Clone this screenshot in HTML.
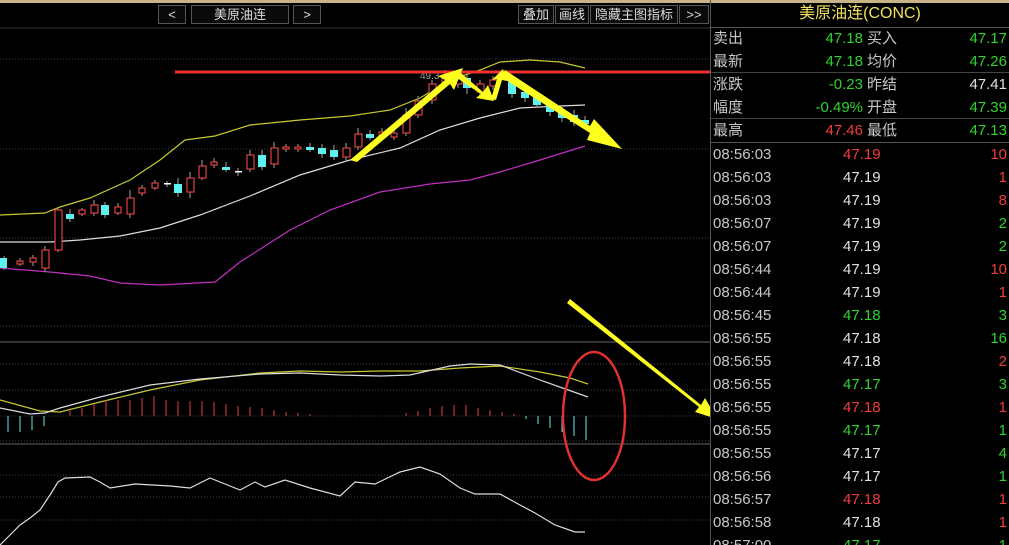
<!DOCTYPE html>
<html><head><meta charset="utf-8"><style>
*{margin:0;padding:0;box-sizing:border-box}
html,body{width:1009px;height:545px}
body{background:#000;overflow:hidden;position:relative;font-family:"Liberation Sans","Noto Sans CJK SC",sans-serif}
.btn{position:absolute;top:5px;height:19px;border:1px solid #555;color:#ddd;font-size:13px;line-height:17px;text-align:center;background:#0a0a0a}
#rp{position:absolute;left:710px;top:0;width:299px;height:545px;border-left:1px solid #555;overflow:hidden}
.r{position:absolute;left:2px;right:2px;height:23px;font-size:15px;line-height:23px}
.r span{position:absolute}
.g{color:#2fd22f}.rd{color:#f03c3c}.w{color:#e0e0e0}.l{color:#c8c8c8}
</style></head><body>
<div style="position:absolute;left:0;top:0;width:1009px;height:3px;background:#c9b48a"></div>
<div class="btn" style="left:158px;width:28px">&lt;</div>
<div class="btn" style="left:191px;width:98px">美原油连</div>
<div class="btn" style="left:293px;width:28px">&gt;</div>
<div class="btn" style="left:518px;width:36px">叠加</div>
<div class="btn" style="left:555px;width:34px">画线</div>
<div class="btn" style="left:590px;width:88px">隐藏主图指标</div>
<div class="btn" style="left:679px;width:30px">&gt;&gt;</div>
<svg width="710" height="545" style="position:absolute;left:0;top:0">
<line x1="0" y1="28" x2="710" y2="28" stroke="#333"/>
<g stroke="#444" stroke-dasharray="1,2">
<line x1="0" y1="59" x2="710" y2="59"/><line x1="0" y1="149" x2="710" y2="149"/><line x1="0" y1="238" x2="710" y2="238"/><line x1="0" y1="326" x2="710" y2="326"/>
<line x1="0" y1="364" x2="710" y2="364"/><line x1="0" y1="390" x2="710" y2="390"/><line x1="0" y1="416" x2="710" y2="416"/><line x1="0" y1="441" x2="710" y2="441"/>
<line x1="0" y1="475" x2="710" y2="475"/><line x1="0" y1="497" x2="710" y2="497"/><line x1="0" y1="520" x2="710" y2="520"/>
</g>
<line x1="0" y1="342" x2="710" y2="342" stroke="#666"/>
<line x1="0" y1="444" x2="710" y2="444" stroke="#666"/>
<polyline fill="none" stroke="#c8c832" stroke-width="1.2" points="0,215 45,213 60,207 90,198 130,180 160,160 185,140 215,136 250,125 300,120 350,116 390,110 420,98 450,80 480,70 500,62 530,60 560,62 585,68"/>
<polyline fill="none" stroke="#ddd" stroke-width="1.2" points="0,242 50,242 80,240 120,236 160,228 200,215 250,196 300,175 350,160 400,148 440,130 480,118 520,108 560,106 585,105"/>
<polyline fill="none" stroke="#c030c0" stroke-width="1.2" points="0,268 50,272 90,276 120,283 160,285 215,282 240,262 290,230 330,210 380,192 430,184 470,180 500,172 540,160 585,146"/>
<g stroke-width="1.2">
<path d="M4 256V270M20 258V266M33 255V266M45 246V272M58 208V252M70 209V222M82 208V216M94 200V216M105 202V218M118 203V215M130 190V218M142 185V196M155 180V190M167 181V187M178 178V197M190 172V198M202 160V180M214 158V168M226 162V172M238 168V176M250 150V172M262 150V170M274 142V168M286 144V152M298 144V152M310 143V152M322 144V158M334 145V160M346 143V162M358 128V150M370 130V140M382 128V139M394 128V140M406 108V136M418 96V118M432 80V104M445 70V86M458 70V88M467 74V94M480 80V96M493 76V90M512 78V98M525 88V102M537 94V108M550 100V116M562 106V122M574 110V126M585 116V128" stroke="#888"/>
</g>
<g fill="#000" stroke="#e04040" stroke-width="1.2">
<rect x="17" y="261" width="6" height="3"/><rect x="30" y="258" width="6" height="4"/><rect x="42" y="250" width="7" height="18"/><rect x="55" y="210" width="7" height="40"/><rect x="79" y="210" width="6" height="4"/><rect x="91" y="205" width="7" height="8"/><rect x="115" y="207" width="6" height="6"/><rect x="127" y="198" width="7" height="16"/><rect x="139" y="188" width="6" height="5"/><rect x="152" y="183" width="6" height="5"/><rect x="187" y="178" width="7" height="14"/><rect x="199" y="166" width="7" height="12"/><rect x="211" y="162" width="6" height="3"/><rect x="247" y="155" width="7" height="14"/><rect x="271" y="148" width="7" height="16"/><rect x="283" y="147" width="6" height="2"/><rect x="295" y="147" width="6" height="2"/><rect x="343" y="148" width="7" height="9"/><rect x="355" y="134" width="7" height="13"/><rect x="379" y="132" width="6" height="4"/><rect x="391" y="133" width="6" height="4"/><rect x="403" y="115" width="7" height="18"/><rect x="415" y="101" width="7" height="14"/><rect x="429" y="84" width="7" height="16"/><rect x="442" y="75" width="7" height="7"/><rect x="455" y="75" width="7" height="9"/><rect x="477" y="84" width="7" height="8"/><rect x="490" y="80" width="7" height="6"/>
</g>
<g fill="#5ff0f0">
<rect x="0" y="258" width="7" height="10"/><rect x="66" y="214" width="8" height="5"/><rect x="101" y="205" width="8" height="10"/><rect x="174" y="184" width="8" height="9"/><rect x="222" y="167" width="8" height="3"/><rect x="258" y="155" width="8" height="12"/><rect x="306" y="147" width="8" height="3"/><rect x="318" y="148" width="8" height="6"/><rect x="330" y="150" width="8" height="7"/><rect x="366" y="134" width="8" height="4"/><rect x="463" y="78" width="8" height="10"/><rect x="508" y="82" width="8" height="12"/><rect x="521" y="92" width="8" height="6"/><rect x="533" y="97" width="8" height="8"/><rect x="546" y="105" width="8" height="7"/><rect x="558" y="110" width="8" height="8"/><rect x="570" y="115" width="8" height="7"/><rect x="581" y="120" width="8" height="4"/>
</g>
<rect x="164" y="183" width="7" height="1.5" fill="#fff"/><rect x="235" y="171" width="7" height="1.5" fill="#fff"/>
<text x="420" y="79" fill="#999" font-size="10" font-family="Liberation Sans">49.3</text>
<line x1="175" y1="72" x2="715" y2="72" stroke="#f03030" stroke-width="3"/>
<g fill="#ffff20">
<polygon points="350,160 445,80 438,76 463,68 454,90 450,84 357,162"/>
<polygon points="461,73 483,92 488,85 494,101 476,98 481,94 457,78"/>
<polygon points="491,99 497,79 492,80 503,69 507,81 502,80 496,100"/>
<polygon points="505,70 590,126 594,119 622,149 587,140 590,133 501,77"/>
<polygon points="570,299 701,405 705,398 717,419 695,412 699,407 567,303"/>
</g>
<polyline fill="none" stroke="#c8c832" stroke-width="1.2" points="0,400 40,411 60,412 100,402 150,390 200,380 260,373 300,371 340,372 380,371 420,371 460,368 500,366 540,372 570,378 588,384"/>
<polyline fill="none" stroke="#ddd" stroke-width="1.2" points="0,408 30,414 45,413 60,408 100,397 150,385 200,379 260,374 300,373 340,375 380,376 410,375 450,366 470,364 500,365 540,380 588,397"/>
<g stroke="#e04040" stroke-width="1"><path d="M70 416V411M82 416V408M94 416V404M106 416V400M118 416V400M130 416V400M142 416V398M154 416V396M166 416V400M178 416V401M190 416V401M202 416V401M214 416V402M226 416V404M238 416V406M250 416V407M262 416V408M274 416V410M286 416V412M298 416V413M310 416V414M406 416V413M418 416V411M430 416V408M442 416V406M454 416V405M466 416V405M478 416V408M490 416V410M502 416V412M514 416V414"/></g>
<g stroke="#5ff0f0" stroke-width="1"><path d="M8 416V432M20 416V432M32 416V430M44 416V426M526 416V419M538 416V424M550 416V428M562 416V432M574 416V436M586 416V440"/></g>
<ellipse cx="594" cy="416" rx="31" ry="64" fill="none" stroke="#e03030" stroke-width="2.5"/>
<polyline fill="none" stroke="#ddd" stroke-width="1.2" points="0,545 10,535 20,525 30,518 40,510 50,495 58,482 65,478 90,477 100,482 110,488 135,484 170,486 190,488 200,483 210,478 225,484 240,490 255,482 265,487 285,480 310,488 340,496 355,482 375,484 400,472 420,467 440,474 460,488 475,494 500,494 520,505 535,513 555,525 575,532 585,532"/>
</svg>
<div id="rp">
<div style="position:absolute;left:0;right:0;top:0;height:28px;border-bottom:1px solid #555;color:#f0e060;font-size:16px;line-height:28px;text-align:center">美原油连(CONC)</div>
<div style="position:absolute;left:0;right:0;top:72px;border-top:1px solid #444"></div>
<div style="position:absolute;left:0;right:0;top:118px;border-top:1px solid #444"></div>
<div style="position:absolute;left:0;right:0;top:142px;border-top:1px solid #555"></div>
<div class="r" style="top:27px"><span class="l" style="left:0">卖出</span><span class="g" style="right:144px">47.18</span><span class="l" style="left:154px">买入</span><span class="g" style="right:0">47.17</span></div>
<div class="r" style="top:50px"><span class="l" style="left:0">最新</span><span class="g" style="right:144px">47.18</span><span class="l" style="left:154px">均价</span><span class="g" style="right:0">47.26</span></div>
<div class="r" style="top:73px"><span class="l" style="left:0">涨跌</span><span class="g" style="right:144px">-0.23</span><span class="l" style="left:154px">昨结</span><span class="w" style="right:0">47.41</span></div>
<div class="r" style="top:96px"><span class="l" style="left:0">幅度</span><span class="g" style="right:144px">-0.49%</span><span class="l" style="left:154px">开盘</span><span class="g" style="right:0">47.39</span></div>
<div class="r" style="top:119px"><span class="l" style="left:0">最高</span><span class="rd" style="right:144px">47.46</span><span class="l" style="left:154px">最低</span><span class="g" style="right:0">47.13</span></div>
<div class="r" style="top:143px"><span class="l" style="left:0">08:56:03</span><span class="rd" style="left:130px">47.19</span><span class="rd" style="right:0">10</span></div>
<div class="r" style="top:166px"><span class="l" style="left:0">08:56:03</span><span class="w" style="left:130px">47.19</span><span class="rd" style="right:0">1</span></div>
<div class="r" style="top:189px"><span class="l" style="left:0">08:56:03</span><span class="w" style="left:130px">47.19</span><span class="rd" style="right:0">8</span></div>
<div class="r" style="top:212px"><span class="l" style="left:0">08:56:07</span><span class="w" style="left:130px">47.19</span><span class="g" style="right:0">2</span></div>
<div class="r" style="top:235px"><span class="l" style="left:0">08:56:07</span><span class="w" style="left:130px">47.19</span><span class="g" style="right:0">2</span></div>
<div class="r" style="top:258px"><span class="l" style="left:0">08:56:44</span><span class="w" style="left:130px">47.19</span><span class="rd" style="right:0">10</span></div>
<div class="r" style="top:281px"><span class="l" style="left:0">08:56:44</span><span class="w" style="left:130px">47.19</span><span class="rd" style="right:0">1</span></div>
<div class="r" style="top:304px"><span class="l" style="left:0">08:56:45</span><span class="g" style="left:130px">47.18</span><span class="g" style="right:0">3</span></div>
<div class="r" style="top:327px"><span class="l" style="left:0">08:56:55</span><span class="w" style="left:130px">47.18</span><span class="g" style="right:0">16</span></div>
<div class="r" style="top:350px"><span class="l" style="left:0">08:56:55</span><span class="w" style="left:130px">47.18</span><span class="rd" style="right:0">2</span></div>
<div class="r" style="top:373px"><span class="l" style="left:0">08:56:55</span><span class="g" style="left:130px">47.17</span><span class="g" style="right:0">3</span></div>
<div class="r" style="top:396px"><span class="l" style="left:0">08:56:55</span><span class="rd" style="left:130px">47.18</span><span class="rd" style="right:0">1</span></div>
<div class="r" style="top:419px"><span class="l" style="left:0">08:56:55</span><span class="g" style="left:130px">47.17</span><span class="g" style="right:0">1</span></div>
<div class="r" style="top:442px"><span class="l" style="left:0">08:56:55</span><span class="w" style="left:130px">47.17</span><span class="g" style="right:0">4</span></div>
<div class="r" style="top:465px"><span class="l" style="left:0">08:56:56</span><span class="w" style="left:130px">47.17</span><span class="g" style="right:0">1</span></div>
<div class="r" style="top:488px"><span class="l" style="left:0">08:56:57</span><span class="rd" style="left:130px">47.18</span><span class="rd" style="right:0">1</span></div>
<div class="r" style="top:511px"><span class="l" style="left:0">08:56:58</span><span class="w" style="left:130px">47.18</span><span class="rd" style="right:0">1</span></div>
<div class="r" style="top:534px"><span class="l" style="left:0">08:57:00</span><span class="g" style="left:130px">47.17</span><span class="g" style="right:0">1</span></div>
</div>
</body></html>
